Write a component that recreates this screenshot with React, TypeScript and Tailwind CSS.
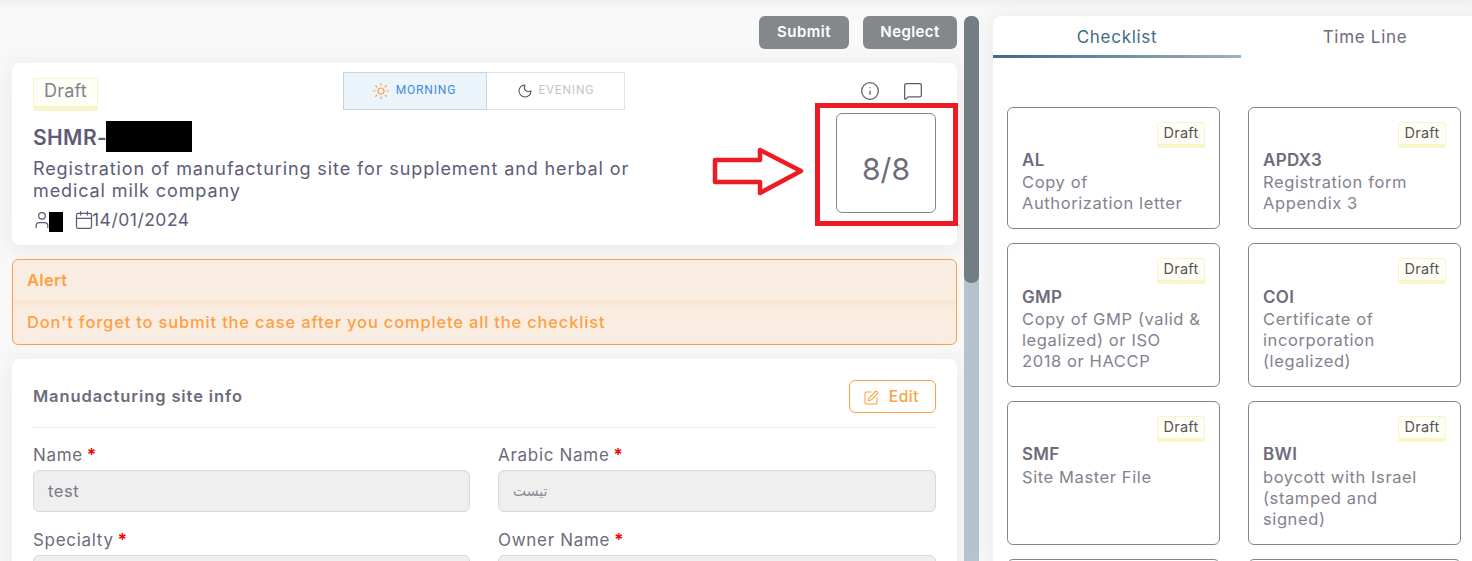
import { Calendar, Info, MessageSquare, Moon, SquarePen, Sun, User } from "lucide-react";

function Req() {
  return <span className="text-[#f00000] ml-1 font-semibold">*</span>;
}

function SmallBadge() {
  return (
    <div className="w-[48px] h-[26px] bg-[#fffef6] border border-[#f8f6c8] border-b-4 rounded-[3px] text-[14.5px] leading-[20px] tracking-[0.3px] text-[#555555] text-center">
      Draft
    </div>
  );
}

function CheckCard({ title, lines, tall, tight }: { title: string; lines: string[]; tall?: boolean; tight?: boolean }) {
  return (
    <div className={`border border-[#85858f] rounded-[6px] bg-white pl-[14px] pr-[14px] pt-[14px] ${tall ? "h-[144px]" : "h-[122px]"}`}>
      <div className="flex justify-end"><SmallBadge /></div>
      <div className={`text-[17px] leading-[21px] font-semibold text-[#6e6b7b] tracking-[0.3px] ${tight ? "mt-[2px] mb-[2px]" : tall ? "mt-[3px] mb-[1px]" : "mt-[2px] mb-[1px]"}`}>{title}</div>
      {lines.map((l) => (
        <div key={l} className="text-[16.5px] leading-[21px] tracking-[0.6px] text-[#84828f] whitespace-nowrap">{l}</div>
      ))}
    </div>
  );
}

function Field({ label, value, arabic }: { label: string; value?: string; arabic?: boolean }) {
  return (
    <div>
      <div className="text-[17px] leading-[24px] text-[#6e6b7b] h-[28px] pt-[1px] tracking-[0.7px]">
        {label}
        <Req />
      </div>
      <div className={`h-[42px] bg-[#efefef] border border-[#d8d6de] rounded-[6px] px-[14px] flex items-center ${arabic ? "text-[14px] text-[#8b8995] font-['DejaVu_Sans',sans-serif]" : "text-[16.5px] tracking-[0.6px] text-[#7b7986]"}`}>
        {value}
      </div>
    </div>
  );
}

export default function App() {
  return (
    <div className="relative h-[561px] w-[1472px] overflow-hidden flex bg-[#f8f8f8] font-['Inter',sans-serif] shadow-[inset_0_10px_10px_-8px_rgba(0,0,0,0.06)]">
      <div className="w-[945px] ml-[12px] shrink-0 pt-[16px]">
        <div className="flex justify-end gap-[14px] h-[33px] mb-[14px]">
          <button className="w-[90px] rounded-[6px] bg-[#85888b] text-white text-[15px] tracking-[0.5px] font-semibold">Submit</button>
          <button className="w-[94px] rounded-[6px] bg-[#85888b] text-white text-[15px] tracking-[0.4px] font-semibold">Neglect</button>
        </div>

        <div className="h-[182px] bg-white rounded-[8px] shadow-[0_4px_24px_rgba(34,41,47,0.08)] flex mb-[14px]">
          <div className="w-[803px] pt-[9px]">
            <div className="flex items-start h-[38px]">
              <div className="ml-[21px] mt-[6px] w-[65px] h-[33px] bg-[#fffef6] border border-[#f8f6c8] border-b-[5px] rounded-[3px] text-[18px] leading-[24px] tracking-[0.2px] text-[#82828c] text-center">
                Draft
              </div>
              <div className="ml-[245px] flex h-[38px] w-[282px] text-[12px] tracking-[0.85px] font-['Roboto',sans-serif]">
                <div className="w-[144px] bg-[#ebf3fb] border border-[#c9d4e0] flex items-center justify-center gap-[6px] text-[#3f8ae0]">
                  <Sun size={18} strokeWidth={1.6} className="text-[#ff9f43] -ml-[2px]" />
                  <span className="-mt-[2px]">MORNING</span>
                </div>
                <div className="flex-1 border border-[#e2e2e2] border-l-0 flex items-center justify-center gap-[6px] text-[#c6c6c6]">
                  <Moon size={16} strokeWidth={1.6} className="text-[#555555]" />
                  <span className="-mt-[2px]">EVENING</span>
                </div>
              </div>
            </div>
            <div className="ml-[21px] mt-[11px] h-[31px] flex items-center text-[21px] font-semibold text-[#5e5c78] tracking-[0.4px]">
              <span className="mt-[3px]">SHMR-</span>
              <span className="inline-block w-[86px] h-[31px] bg-black -ml-[1px]" />
            </div>
            <div className="ml-[21px] mt-[6px] w-[620px] text-[18px] leading-[22px] text-[#5e5c78] tracking-[0.9px]">
              Registration of manufacturing site for supplement and herbal or medical milk company
            </div>
            <div className="ml-[21px] mt-[8px] flex items-center h-[20px] text-[17.5px] text-[#5e5c78] tracking-[0.5px]">
              <User size={20} strokeWidth={1.5} className="-ml-[1px]" />
              <span className="inline-block w-[14px] h-[20px] bg-black -ml-[3px] mt-[3px]" />
              <Calendar size={20} strokeWidth={1.5} className="ml-[11px] -mr-[2px]" />
              <span>14/01/2024</span>
            </div>
          </div>
          <div className="flex-1 pt-[18px] pr-[21px]">
            <div className="flex justify-end gap-[23px] pr-[13px] h-[20px] text-[#5e5c66]">
              <Info size={20} strokeWidth={1.5} />
              <MessageSquare size={20} strokeWidth={1.5} />
            </div>
            <div className="mt-[12px] ml-auto w-[100px] h-[100px] border border-[#85858f] rounded-[6px] flex items-center justify-center pt-[12px] text-[30px] text-[#6e6b7b]">
              8/8
            </div>
          </div>
        </div>

        <div className="h-[86px] bg-[#f9ede1] border border-[#ff9f43] rounded-[6px] mb-[14px] overflow-hidden text-[#ff9f43]">
          <div className="h-[40px] pl-[14px] flex items-center text-[16.5px] tracking-[0.3px] font-semibold shadow-[0_4px_8px_rgba(255,159,67,0.12)]">Alert</div>
          <div className="h-[44px] pl-[14px] flex items-center text-[16.5px] font-medium tracking-[0.82px]">
            Don't forget to submit the case after you complete all the checklist
          </div>
        </div>

        <div className="bg-white rounded-[8px] shadow-[0_4px_24px_rgba(34,41,47,0.08)] h-[300px] px-[21px] pt-[21px]">
          <div className="flex items-center justify-between h-[33px]">
            <div className="text-[16.5px] font-semibold text-[#6e6b7b] tracking-[0.9px]">Manudacturing site info</div>
            <button className="w-[87px] h-[33px] border border-[#ff9f43] rounded-[6px] text-[#ff9f43] text-[15.5px] tracking-[0.6px] font-medium flex items-center justify-center gap-[10px]">
              <SquarePen size={16} strokeWidth={1.6} className="mt-[2px] -ml-[3px]" />
              <span>Edit</span>
            </button>
          </div>
          <div className="h-px bg-[#ebe9f1] mt-[14px]" />
          <div className="grid grid-cols-[437px_438px] gap-x-[28px] gap-y-[15px] mt-[14px]">
            <Field label="Name" value="test" />
            <Field label="Arabic Name" value="تيست" arabic />
            <Field label="Specialty" />
            <Field label="Owner Name" />
          </div>
        </div>
      </div>

      <div className="ml-[7px] mt-[16px] w-[15px] h-[545px] shrink-0 bg-[#b5c3cc] rounded-t-[7px]">
        <div className="h-[267px] bg-[#737d84] rounded-[7px]" />
      </div>

      <div className="ml-[14px] mt-[16px] w-[496px] h-[545px] shrink-0 bg-white rounded-tl-[8px] shadow-[0_4px_24px_rgba(34,41,47,0.08)]">
        <div className="flex h-[42px] text-[17px] tracking-[0.7px]">
          <div className="w-[248px] text-center text-[#3f6b85] relative leading-[43px]">
            Checklist
            <div className="absolute left-0 right-0 bottom-0 h-[3px] bg-gradient-to-r from-[#3f6b85] to-[#9db2c0]" />
          </div>
          <div className="w-[248px] text-center text-[#6e6b7b] leading-[43px]">Time Line</div>
        </div>
        <div className="grid grid-cols-[213px_213px] gap-x-[28px] gap-y-[14px] pl-[14px] pt-[49px]">
          <CheckCard title="AL" lines={["Copy of", "Authorization letter"]} />
          <CheckCard title="APDX3" lines={["Registration form", "Appendix 3"]} />
          <CheckCard title="GMP" lines={["Copy of GMP (valid &", "legalized) or ISO", "2018 or HACCP"]} tall />
          <CheckCard title="COI" lines={["Certificate of", "incorporation", "(legalized)"]} tall />
          <CheckCard title="SMF" lines={["Site Master File"]} tall tight />
          <CheckCard title="BWI" lines={["boycott with Israel", "(stamped and", "signed)"]} tall tight />
          <div className="h-[40px] border border-[#85858f] rounded-[6px]" />
          <div className="h-[40px] border border-[#85858f] rounded-[6px]" />
        </div>
      </div>

      <div className="absolute left-[815px] top-[103px] w-[143px] h-[123px] border-[5px] border-[#ed1c24]" />
      <svg className="absolute left-[710px] top-[145px]" width="100" height="54" viewBox="0 0 100 54" fill="none">
        <path d="M5 15 H50 V5 L91 26 L50 48 V37 H5 Z" stroke="#ed1c24" strokeWidth="4.5" strokeLinejoin="round" />
      </svg>
    </div>
  );
}
